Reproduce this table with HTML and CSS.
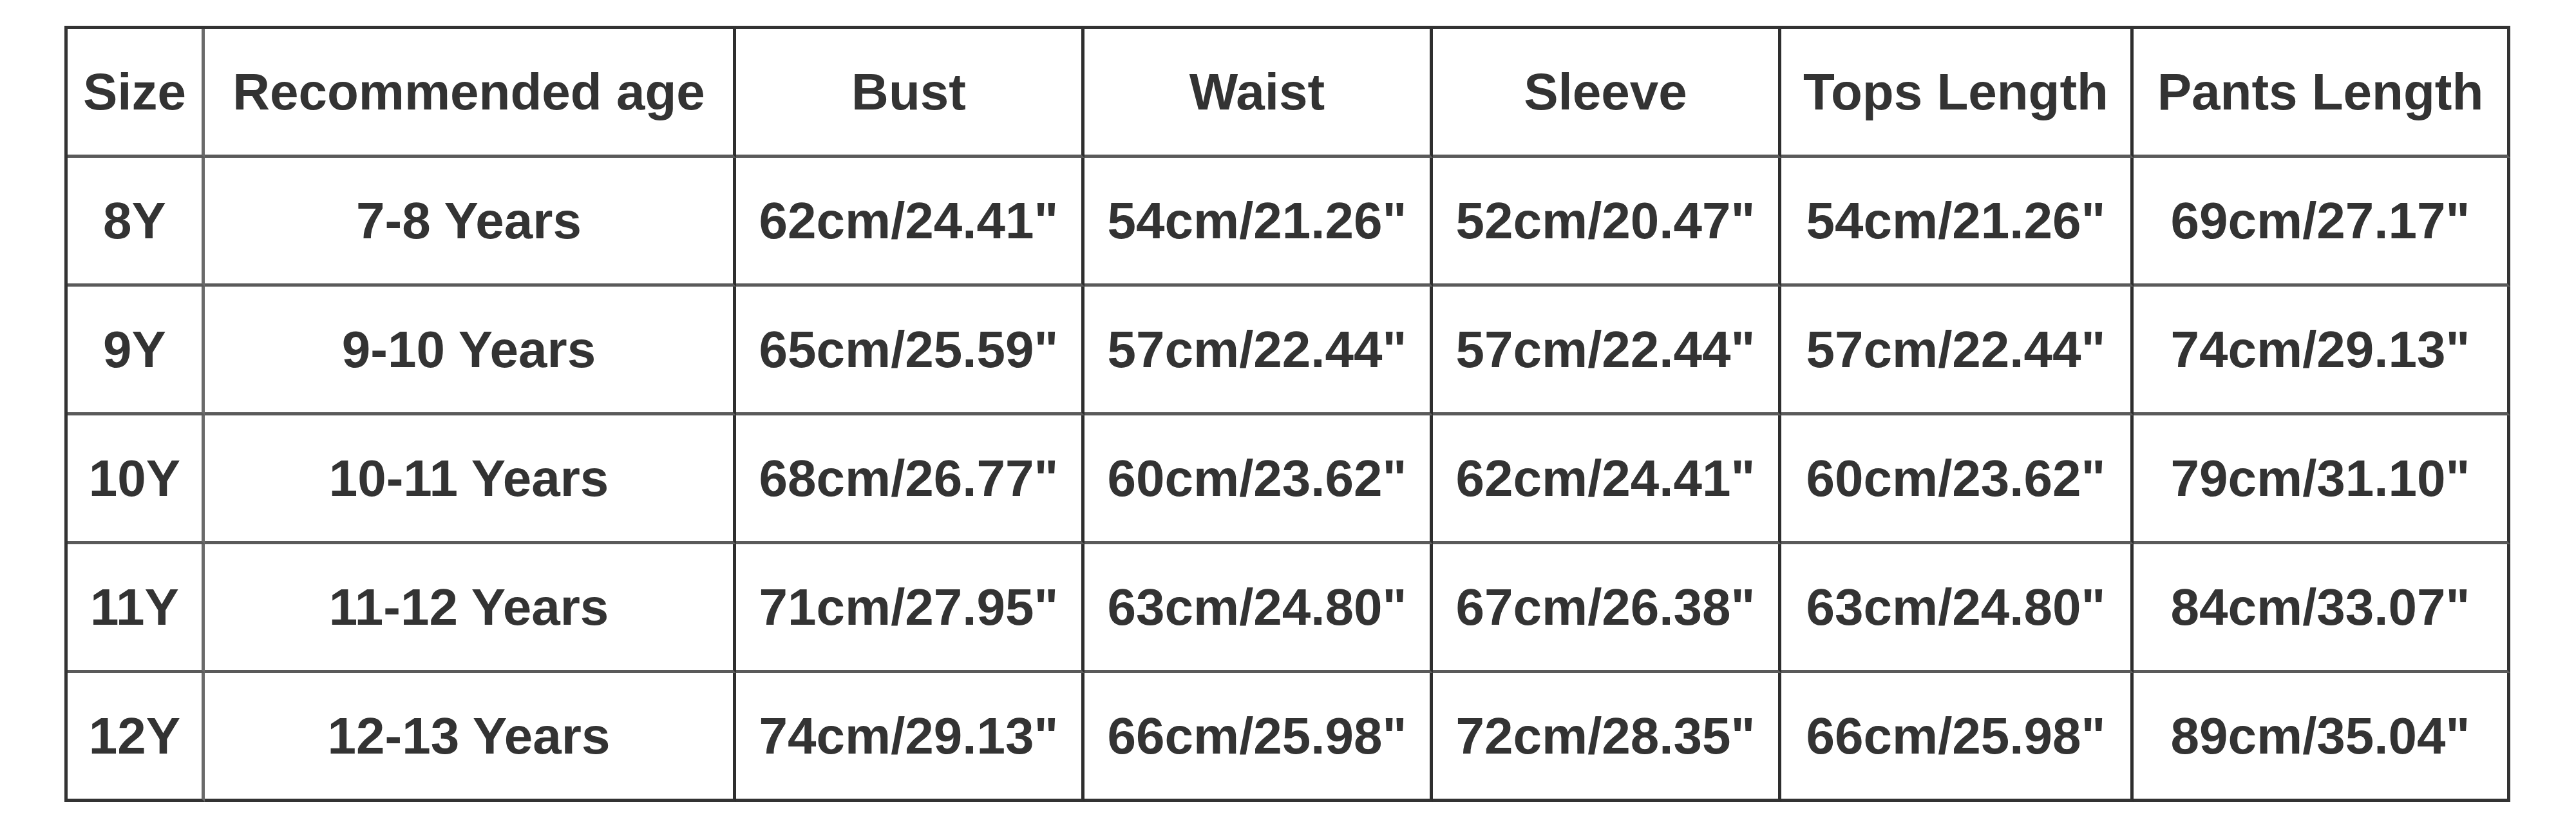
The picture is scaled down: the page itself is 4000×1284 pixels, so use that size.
FILE: index.html
```html
<!DOCTYPE html>
<html lang="en">
<head>
<meta charset="utf-8">
<title>Size Chart</title>
<link rel="stylesheet" href="styles.css">
</head>
<body>
<table class="size-chart">
  <colgroup>
    <col class="c-size">
    <col class="c-age">
    <col class="c-bust">
    <col class="c-waist">
    <col class="c-sleeve">
    <col class="c-tops">
    <col class="c-pants">
  </colgroup>
  <thead>
    <tr>
      <th>Size</th>
      <th>Recommended age</th>
      <th>Bust</th>
      <th>Waist</th>
      <th>Sleeve</th>
      <th>Tops Length</th>
      <th>Pants Length</th>
    </tr>
  </thead>
  <tbody>
    <tr>
      <td>8Y</td><td>7-8 Years</td><td>62cm/24.41"</td><td>54cm/21.26"</td><td>52cm/20.47"</td><td>54cm/21.26"</td><td>69cm/27.17"</td>
    </tr>
    <tr>
      <td>9Y</td><td>9-10 Years</td><td>65cm/25.59"</td><td>57cm/22.44"</td><td>57cm/22.44"</td><td>57cm/22.44"</td><td>74cm/29.13"</td>
    </tr>
    <tr>
      <td>10Y</td><td>10-11 Years</td><td>68cm/26.77"</td><td>60cm/23.62"</td><td>62cm/24.41"</td><td>60cm/23.62"</td><td>79cm/31.10"</td>
    </tr>
    <tr>
      <td>11Y</td><td>11-12 Years</td><td>71cm/27.95"</td><td>63cm/24.80"</td><td>67cm/26.38"</td><td>63cm/24.80"</td><td>84cm/33.07"</td>
    </tr>
    <tr>
      <td>12Y</td><td>12-13 Years</td><td>74cm/29.13"</td><td>66cm/25.98"</td><td>72cm/28.35"</td><td>66cm/25.98"</td><td>89cm/35.04"</td>
    </tr>
  </tbody>
</table>
</body>
</html>
```

FILE: styles.css
```css
html, body {
  margin: 0;
  padding: 0;
  background: #ffffff;
}

body {
  padding: 40px 0 0 100px;
  font-family: "Liberation Sans", Arial, sans-serif;
  color: #333333;
}

.size-chart {
  border-collapse: separate;
  border-spacing: 0;
  table-layout: fixed;
  width: 3798px;
  border-top: 5px solid #333333;
  border-left: 5px solid #333333;
}

.c-size { width: 213px; }
.c-age { width: 825px; }
.c-bust { width: 541px; }
.c-waist { width: 541px; }
.c-sleeve { width: 541px; }
.c-tops { width: 547px; }
.c-pants { width: 585px; }

.size-chart th,
.size-chart td {
  height: 200px;
  padding: 0;
  text-align: center;
  vertical-align: middle;
  font-size: 80px;
  font-weight: bold;
  white-space: nowrap;
  border-right: 5px solid #2e2e2e;
  border-bottom: 5px solid #5a5a5a;
  box-sizing: border-box;
}

.size-chart th:first-child,
.size-chart td:first-child {
  border-right-color: #6a6a6a;
}

.size-chart th:last-child,
.size-chart td:last-child {
  border-right-color: #333333;
}

.size-chart tbody tr:last-child td {
  border-bottom-color: #333333;
}
```
